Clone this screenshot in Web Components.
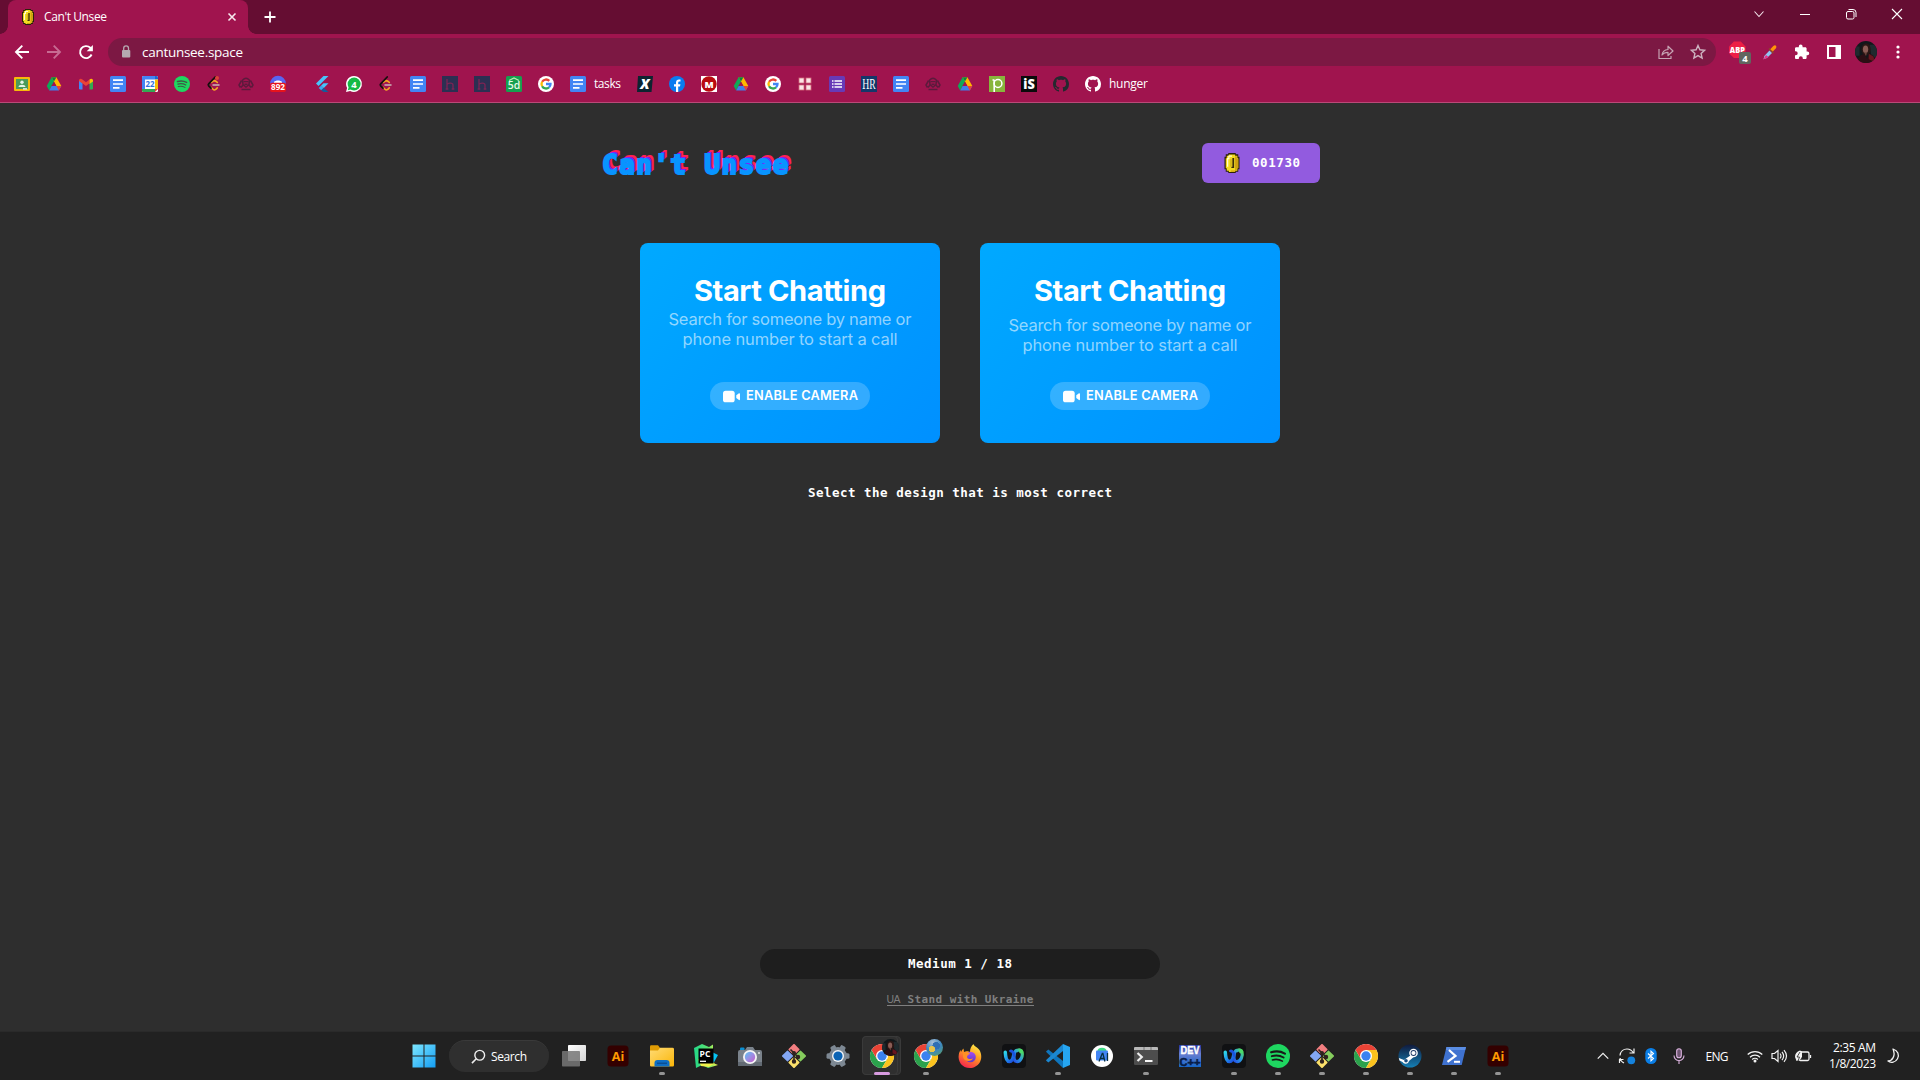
<!DOCTYPE html>
<html lang="en">
<head>
<meta charset="utf-8">
<title>Can't Unsee</title>
<style>
html,body{margin:0;height:100%;background:#2e2e2e;overflow:hidden}
body{font-family:"Open Sans","Noto Sans",sans-serif}
</style>
</head>
<body>
<desk-screen></desk-screen>
<script>
const svg=(vb,body)=>`<svg viewBox="0 0 ${vb} ${vb}" width="100%" height="100%">${body}</svg>`;
const crest='<g fill="none" stroke="#5c1a3c" stroke-width="1.500"><path d="M4.500 4.200Q8 .5 11.500 4.200L11 8.500 8 11 5 8.500z"/><path d="M3.600 4.500 1 9l1.500 2.500M12.400 4.500 15 9l-1.500 2.500M3 11.500 5 9M13 11.500 11 9M3.500 13.500h9"/></g><path d="M5.500 5h5v1.200h-5zM6.500 7.500h3V9h-3z" fill="#5c1a3c"/>';
const leet='<path d="M9.600 5.300 8 4.600 5.500 6.300M5 11.300l2 2a2 2 0 0 0 2.800 0l1.500-1.400M8 4.600l1.600.4 1.700 1.400" fill="none" stroke="#f5a623" stroke-width="1.600" stroke-linecap="round"/><path d="M9.200 1 2.700 7.800a1.500 1.500 0 0 0 0 2l2.300 2.300" fill="none" stroke="#15100c" stroke-width="1.800" stroke-linecap="round"/><path d="M7 9h6" stroke="#c9b7b9" stroke-width="1.500" stroke-linecap="round"/>';
const docs='<rect width="16" height="16" rx="1.500" fill="#4285f4"/><path d="M3 4.200h10M3 8h10M3 11.800h6.500" stroke="#fff" stroke-width="1.700"/>';
const drive='<path d="M5.600 1.300h4.800L5.500 10.100 3.200 14.500 .7 10.100z" fill="#0fa958"/><path d="M10.400 1.300H5.600l4.800 8.800h4.900z" fill="#ffba00"/><path d="M3.200 14.500h9.600l2.500-4.400H5.600z" fill="#3f7fea"/><path d="M5.600 1.300h4.800L8 5.600z" fill="#0b8043"/><path d="M10.400 10.100h4.900l-2.500 4.400z" fill="#e94335"/><path d="M8 5.800 10.400 10.100H5.600z" fill="#a0144d"/>';
const google='<circle cx="8" cy="8" r="8" fill="#fff"/><g fill="none" stroke-width="2.300"><path d="M11.300 4.900A4.500 4.500 0 0 0 4.100 5.800" stroke="#ea4335"/><path d="M4.100 5.800a4.500 4.500 0 0 0 0 4.400" stroke="#fbbc05"/><path d="M4.100 10.200a4.500 4.500 0 0 0 6.900 1.200" stroke="#34a853"/><path d="M8 8h4.500a4.500 4.500 0 0 1-1.500 3.400" stroke="#4285f4"/></g>';
const octo=c=>`<path fill="${c}" d="M8 0C3.580 0 0 3.580 0 8c0 3.540 2.290 6.530 5.470 7.590.4.070.55-.17.55-.38 0-.19-.01-.82-.01-1.490-2.010.37-2.530-.49-2.690-.94-.09-.23-.48-.94-.82-1.130-.28-.15-.68-.52-.01-.53.63-.01 1.080.58 1.230.82.72 1.210 1.870.87 2.330.66.07-.52.28-.87.51-1.070-1.780-.2-3.640-.89-3.640-3.950 0-.87.31-1.590.82-2.150-.08-.2-.36-1.020.08-2.120 0 0 .67-.21 2.200.82.64-.18 1.320-.27 2-.27s1.360.09 2 .27c1.530-1.040 2.200-.82 2.200-.82.44 1.100.16 1.920.08 2.120.51.56.82 1.270.82 2.150 0 3.070-1.870 3.750-3.650 3.950.29.25.54.73.54 1.480 0 1.070-.01 1.930-.01 2.200 0 .21.15.46.55.38A8.010 8.010 0 0 0 16 8c0-4.420-3.580-8-8-8z"/>`;
const hk='<rect width="16" height="16" fill="#2c2f52"/><path d="M5 3v10M5 8.500c1-2 6-2 6 .5v4M3.700 13h2.600M9.700 13h2.600" fill="none" stroke="#7c2455" stroke-width="1.300"/>';
const spot=(c,k)=>`<circle cx="12" cy="12" r="12" fill="${c}"/><g fill="none" stroke="${k}" stroke-linecap="round"><path d="M5.200 8.300c4.500-1.300 9.800-.9 13.700 1.300" stroke-width="2.200"/><path d="M5.800 12.200c4-1.100 8.300-.7 11.800 1.300" stroke-width="1.900"/><path d="M6.400 15.900c3.500-.9 6.800-.6 10 1.200" stroke-width="1.600"/></g>`;
const chrome='<circle cx="12" cy="12" r="12" fill="#fff"/><path d="M1.600 6A12 12 0 0 0 12 24l5.200-9L12 12 6.800 15z" fill="#2ba24c"/><path d="M22.400 6A12 12 0 0 1 12 24l5.200-9V9L12 6z" fill="#fcc31e"/><path d="M1.600 6 6.800 15 12 12V6h10.400A12 12 0 0 0 1.600 6z" fill="#ea4335"/><circle cx="12" cy="12" r="6" fill="#fff"/><circle cx="12" cy="12" r="4.700" fill="#3b82f0"/>';
const gitw='<g transform="rotate(45 12 12)"><rect x="3.300" y="3.300" width="8.200" height="8.200" rx=".6" fill="#f27e80"/><rect x="12.500" y="3.300" width="8.200" height="8.200" rx=".6" fill="#85cc5d"/><rect x="3.300" y="12.500" width="8.200" height="8.200" rx=".6" fill="#83a7f4"/><rect x="12.500" y="12.500" width="8.200" height="8.200" rx=".6" fill="#fbe06b"/></g><g stroke="#30231f" stroke-width="1.600" fill="#30231f"><path d="M8.500 5.500 12 9v9M12 9l4 4" fill="none"/><circle cx="12" cy="9" r="1.200"/><circle cx="12" cy="17.500" r="1.400"/><circle cx="16" cy="13" r="1.400"/></g>';
const ai='<rect x="1.500" y="1.500" width="21" height="21" rx="3.500" fill="#330000"/><text x="12" y="16.500" text-anchor="middle" font-family="Open Sans" font-weight="700" font-size="12.500" fill="#ff9a00">Ai</text>';
const webex='<defs><linearGradient id="wa" x1="0" y1="0" x2="1" y2="1"><stop offset="0" stop-color="#2cd3e8"/><stop offset=".6" stop-color="#1e7bea"/><stop offset="1" stop-color="#1b46d8"/></linearGradient><linearGradient id="wb" x1="0" y1="1" x2="1" y2="0"><stop offset="0" stop-color="#2450e8"/><stop offset=".5" stop-color="#299be0"/><stop offset="1" stop-color="#53e35b"/></linearGradient></defs><rect width="24" height="24" rx="4" fill="#101113"/><path d="M15.500 6.500c-4-1.500-5 10.500-1 11 4.500.5 6.500-6 5.500-9.500-.7-2.300-3-2.500-4.500-1.500" fill="none" stroke="url(#wb)" stroke-width="3.200" stroke-linecap="round" stroke-linejoin="round"/><path d="M3.300 8.300c.2 4.500 1.300 9 4.200 9.200 3 .1 4-4.500 4.500-8" fill="none" stroke="url(#wa)" stroke-width="3.500" stroke-linecap="round"/><path d="M8.500 7c1.800-.5 3 2 3.600 4.500" fill="none" stroke="#1b52dd" stroke-width="2.800" stroke-linecap="round"/><circle cx="19" cy="7.500" r="1.900" fill="#4bdc6b"/>';
const coin='<path d="M5 0h6v1h2v2h1v10h-1v2h-2v1H5v-1H3v-2H2V3h1V1h2z" fill="#2b2208"/><path d="M5.500 1.100h5v1h1.800v2h.7v8h-.7v2h-1.800v1h-5v-1H3.800v-2H3V4.100h.8V2.100h1.700z" fill="#f3da20"/><path d="M5 2h3v1H6v2H5v6H4V4h1z" fill="#fffbd0"/><path d="M10.500 2.500h1.300v2h1.200v7.500h-1.200v2h-1.300v1H7v-1h3.500z" fill="#cfa010"/><path d="M8.300 4h1.400v8H7.500v-1h.8z" fill="#3a2c08"/><path d="M6.700 5h1v6h-1z" fill="#c9ab18"/>';
const face='<defs><clipPath id="fc"><circle cx="12" cy="12" r="12"/></clipPath></defs><g clip-path="url(#fc)"><rect width="24" height="24" fill="#11171a"/><path d="M16 4h8v14h-6zM0 6h5v10H0z" fill="#1f2a2e"/><ellipse cx="12" cy="9" rx="5" ry="6.500" fill="#2a1614"/><ellipse cx="11.500" cy="9" rx="2.900" ry="4.200" fill="#8a5c55"/><path d="M2 24c1-7 5-9 8-10l3 5 3-5c4 1 6 4 7 10z" fill="#2c0f14"/><path d="M15 14l5 3 2 6-7-3z" fill="#68161f"/><path d="M10 12.500h3l-1 4z" fill="#6b443c"/></g>';
const IC={
coin:[16,coin],
close:[16,'<path d="m4.500 4.500 7 7m0-7-7 7" stroke="#f7e9ee" stroke-width="1.600"/>'],
plus:[16,'<path d="M8 2.500v11M2.500 8h11" stroke="#fff" stroke-width="1.800"/>'],
chev:[16,'<path d="m3.500 5.500 4.500 5 4.500-5" fill="none" stroke="#f3e6ec" stroke-width="1.100"/>'],
min:[16,'<path d="M3 8.500h10" stroke="#fff"/>'],
restore:[16,'<g fill="none" stroke="#fff"><rect x="3.500" y="5.500" width="7.500" height="7.500" rx="1.500"/><path d="M5.500 3.500H10a3 3 0 0 1 3 3V11"/></g>'],
wclose:[16,'<path d="m3 3 10 10m0-10L3 13" stroke="#fff" stroke-width="1.100"/>'],
back:[16,'<path d="M15 8H2m6.300-6.300L2 8l6.300 6.300" fill="none" stroke="#fff" stroke-width="1.900"/>'],
fwd:[16,'<path d="M1 8h13M7.700 1.700 14 8l-6.300 6.300" fill="none" stroke="#c76b92" stroke-width="1.900"/>'],
reload:[16,'<path d="M13.600 10.500A6 6 0 1 1 12.300 3.800l1 1" fill="none" stroke="#fff" stroke-width="1.900"/><path d="M14.900 1v6.200H8.700z" fill="#fff"/>'],
lock:[16,'<rect x="4" y="6" width="8.300" height="7.500" rx="1" fill="#b5a9b0"/><path d="M5.700 6V4.300a2.400 2.400 0 0 1 4.800 0V6" fill="none" stroke="#b5a9b0" stroke-width="1.300"/>'],
share:[16,'<path d="M1 5v9.500h12V12M4 11c.5-3.500 2.500-5.300 6-5.500V2.200L15 7l-5 4.500V8.300C7.500 8.300 5.500 9 4 11z" fill="none" stroke="#c7a3b3" stroke-width="1.200" stroke-linejoin="round"/>'],
star:[16,'<path d="m8 1.500 1.900 4.300 4.700.5-3.500 3.100 1 4.600L8 11.600 3.900 14l1-4.600L1.400 6.300l4.700-.5z" fill="none" stroke="#cdb3c0" stroke-width="1.400"/>'],
abp:[24,'<path d="M5.300 0h7.400L18 5.300v7.400L12.700 18H5.300L0 12.700V5.300z" transform="translate(0 -.5) scale(.92)" fill="#ed1e45"/><text x="8.300" y="10.700" text-anchor="middle" font-family="Open Sans" font-weight="800" font-size="8.200" textLength="15" lengthAdjust="spacingAndGlyphs" fill="#fff">ABP</text><rect x="10" y="10" width="12" height="12" rx="2" fill="#61655f"/><text x="16" y="19.700" text-anchor="middle" font-family="Open Sans" font-weight="700" font-size="9.500" fill="#fff">4</text>'],
drop:[16,'<path d="M7.500 6.500 10 9l-5 5-3.500 1.200L2.300 12z" fill="#8fc5f2"/><path d="m4 11 2.500 2L1.200 15.500z" fill="#ee2c86"/><path d="m7 4.500 4.500 4.500" stroke="#8a4b28" stroke-width="1.500"/><path d="m8.300 5.300 3-3.300c2-1.700 4 .2 2.700 2.200l-3.200 3.300z" fill="#ff9408"/>'],
puzzle:[16,'<path d="M13.400 7.500h-.8V4.600c0-.7-.6-1.300-1.300-1.300H8.600V2.500a1.900 1.900 0 0 0-3.800 0v.8H2.200C1.500 3.300 1 3.900 1 4.600v2.600h.7a2 2 0 0 1 0 4H1v2.500c0 .7.500 1.300 1.200 1.300h2.600v-.7a2 2 0 0 1 4 0v.7h2.500c.7 0 1.300-.6 1.300-1.300v-2.500h.8a1.850 1.850 0 0 0 0-3.700z" fill="#fff"/>'],
side:[16,'<path d="M1 1h14v14H1zM3 3v10h6.500V3z" fill="#fff" fill-rule="evenodd"/>'],
face:[24,face],
dots:[16,'<g fill="#fff"><circle cx="8" cy="3" r="1.600"/><circle cx="8" cy="8" r="1.600"/><circle cx="8" cy="13" r="1.600"/></g>'],
classroom:[16,'<rect y="1" width="16" height="14" rx="1" fill="#f7b90a"/><rect x="2" y="3" width="12" height="10" fill="#4a9a5a"/><rect x="9" y="12.200" width="4" height="1.400" fill="#e8f3ec"/><circle cx="8" cy="6.300" r="1.700" fill="#e6f4e9"/><path d="M4.500 11c0-3 7-3 7 0z" fill="#e6f4e9"/>'],
drive:[16,drive],
gmail:[16,'<path d="M1 13V4.500L4.500 7v6.500H2z" fill="#4285f4"/><path d="M15 13V4.500L11.500 7v6.500H14z" fill="#34a853"/><path d="M1 5.500C.5 3 2.700 2 4.500 3.500L8 6.200l3.500-2.700V7.200L8 9.900 1 5z" fill="#ea4335"/><path d="M11.500 3.500C13.300 2 15.500 3 15 5.500l-3.500 2.600z" fill="#fbbc04"/>'],
docs:[16,docs],
cal:[16,'<rect width="16" height="16" rx="1.500" fill="#fff"/><path d="M0 1.500A1.500 1.500 0 0 1 1.500 0H13v3.500H3V13H0z" fill="#4285f4"/><path d="M13 0h1.500A1.500 1.500 0 0 1 16 1.500v2h-3z" fill="#1967d2"/><path d="M13 3.500h3V13h-3z" fill="#fbbc04"/><path d="M0 13h13v3H1.500A1.500 1.500 0 0 1 0 14.500z" fill="#34a853"/><path d="M13 13h3l-3 3z" fill="#ea4335"/><text x="8" y="11.300" text-anchor="middle" font-family="Open Sans" font-weight="700" font-size="8" textLength="9" lengthAdjust="spacingAndGlyphs" fill="#2f6fde">22</text>'],
spotb:[24,spot('#1ed760','#3d5a45')],
spot:[24,spot('#1ed760','#191919')],
leet:[16,leet],
leetd:[16,leet+'<circle cx="11" cy="2" r="2" fill="#db4437"/>'],
crest:[16,crest],
b892:[16,'<circle cx="8" cy="7.500" r="7.800" fill="#5865f2"/><path d="M4 6c1.500-2 6.500-2 8 0v2H4z" fill="#fff"/><rect y="6.700" width="16" height="9.300" rx="2" fill="#e6141c"/><text x="8" y="14.200" text-anchor="middle" font-family="Open Sans" font-weight="700" font-size="8" textLength="14" lengthAdjust="spacingAndGlyphs" fill="#fff">892</text>'],
flutter:[16,'<path d="M9.500 0h5L4.500 10 2 7.500z" fill="#47c5fb"/><path d="M9.500 7.300h5L9.800 12 7 9.700z" fill="#47c5fb"/><path d="m7.200 9.600 2.500 2.400-2.500 2.300L4.700 12z" fill="#3aa9ee"/><path d="m7.200 14.300 2.500-2.400 4.800 4.100h-5z" fill="#145c9c"/>'],
wa:[16,'<path d="M8 0a8 8 0 1 1-3.900 15L0 16l1.100-4A8 8 0 0 1 8 0z" fill="#fff"/><circle cx="8.100" cy="8" r="6.500" fill="#16b945"/><path d="m1.800 14.200 1-3.500 2.500 2.500z" fill="#16b945"/><text x="8" y="11.500" text-anchor="middle" font-family="Open Sans" font-weight="700" font-size="9.500" fill="#fff">4</text>'],
hk:[16,hk],
sd:[16,'<rect width="16" height="16" rx="1.500" fill="#169f4f"/><text x="8" y="13.300" text-anchor="middle" font-family="Open Sans" font-weight="600" font-size="10.500" fill="#e9f9e9">5d</text><path d="M3 4.500 8 2l5 2.500" fill="none" stroke="#bfe9b4" stroke-width="1.200"/>'],
google:[16,google],
xx:[16,'<path d="M1 0h15l-1.500 16H0z" fill="#0d2430"/><text x="8" y="13.200" text-anchor="middle" font-family="Open Sans" font-style="italic" font-weight="800" font-size="14" fill="#fff">X</text>'],
fb:[16,'<circle cx="8" cy="8" r="8" fill="#0a7cf0"/><path d="M7 16v-5.500H5V8.200h2V6.600c0-2 1.200-3.200 3-3.200h1.500v2h-1c-1 0-1.300.6-1.300 1.300v1.500h2.200l-.4 2.300H9.200V16z" fill="#fff"/>'],
m:[16,'<rect width="16" height="16" fill="#fff"/><circle cx="8" cy="8" r="7.700" fill="#b90b10"/><text x="8" y="11.500" text-anchor="middle" font-family="Open Sans" font-weight="800" font-size="9.500" fill="#fff">M</text>'],
four:[16,'<g fill="#fbe4e4" stroke="#d56c7c" stroke-width=".8"><rect x="2" y="2" width="5" height="5"/><rect x="9" y="2" width="5" height="5"/><rect x="2" y="9" width="5" height="5"/><rect x="9" y="9" width="5" height="5"/></g>'],
list:[16,'<rect width="16" height="16" rx="1.500" fill="#673ab7"/><path d="M5.500 5h7.500M5.500 8h7.500M5.500 11h7.500M3 5h1.500M3 8h1.500M3 11h1.500" stroke="#fff" stroke-width="1.600"/>'],
hr:[16,'<rect width="16" height="16" fill="#14376a"/><text x="8" y="12.700" text-anchor="middle" font-family="Liberation Serif" font-size="14" textLength="13.500" lengthAdjust="spacingAndGlyphs" fill="#fff">HR</text>'],
p:[16,'<rect width="16" height="16" fill="#88b53c"/><path d="M5.200 16V4M3.500 4h2" stroke="#fff" stroke-width="1.600"/><circle cx="9" cy="7.500" r="3.900" fill="none" stroke="#fff" stroke-width="1.500"/>'],
is:[16,'<rect width="16" height="16" fill="#0b0b0b"/><text x="8" y="13" text-anchor="middle" font-family="Open Sans" font-weight="800" font-size="13.500" textLength="11.500" lengthAdjust="spacingAndGlyphs" fill="#fff">iS</text>'],
octd:[16,octo('#24292f')],
octw:[16,octo('#fff')],
video:[16,'<rect x="0" y="2.500" width="11" height="11" rx="2.500" fill="#fff"/><path d="M12.500 6.800 15 5q1-.3 1 .8v4.900q0 1-1 .6L12.500 9.500z" fill="#fff"/>'],
win:[24,'<defs><linearGradient id="wg" x1="0" y1="0" x2="24" y2="24" gradientUnits="userSpaceOnUse"><stop offset="0" stop-color="#7fe8ff"/><stop offset="1" stop-color="#119cf4"/></linearGradient></defs><path d="M.5.500h11v11H.5zM12.500.500h11v11h-11zM.5 12.500h11v11H.5zM12.500 12.500h11v11h-11z" fill="url(#wg)"/>'],
mag:[16,'<circle cx="9.300" cy="6.700" r="5.200" fill="none" stroke="#eee" stroke-width="1.500"/><path d="M5.600 10.400 1 15" stroke="#eee" stroke-width="1.700"/>'],
tv:[24,'<defs><linearGradient id="tg" x2="1" y2="1"><stop stop-color="#fff"/><stop offset="1" stop-color="#d4d4d4"/></linearGradient></defs><rect x="6" y="1" width="18" height="16" rx=".8" fill="url(#tg)"/><rect y="7" width="18" height="15.500" rx=".8" fill="#777" opacity=".85"/>'],
ai:[24,ai],
folder:[24,'<defs><linearGradient id="fg" x2="1" y2="1"><stop stop-color="#ffdb75"/><stop offset="1" stop-color="#fbb608"/></linearGradient></defs><path d="M0 2.500Q0 1.300 1.200 1.300H8l2 2.500V8H0z" fill="#e09c04"/><path d="M0 6.500h8l2-2.700h12.500Q24 3.800 24 5.200v16Q24 22.500 22.800 22.500H1.200Q0 22.500 0 21.200z" fill="url(#fg)"/><path d="M4.500 22.500v-3.500q0-3 3-3h9q3 0 3 3v3.500z" fill="#0f6fc4"/><path d="M7 19.300h10" stroke="#0b4f94" stroke-width="1.500"/>'],
pc:[24,'<defs><linearGradient id="pg" x2="1"><stop stop-color="#21d789"/><stop offset=".6" stop-color="#5fe36f"/><stop offset="1" stop-color="#fcf84a"/></linearGradient></defs><path d="M0 4 8 0l7 3 4-2.500L19 5v14l5 2-10 3L8 21l-6 3L1 14z" fill="url(#pg)"/><path d="m18 8 6 3-5 9z" fill="#07c3f2"/><path d="m4 15 3 7 8 1 6-4z" fill="#f2f04b"/><rect x="4.500" y="4.500" width="15" height="15" fill="#000"/><text x="11" y="12.600" text-anchor="middle" font-family="Open Sans" font-weight="700" font-size="8.500" fill="#fff">PC</text><path d="M6 17.300h6" stroke="#fff" stroke-width="1.300"/>'],
cam:[24,'<defs><linearGradient id="cg" x2="1" y2="1"><stop stop-color="#57c4ef"/><stop offset=".5" stop-color="#9a8fe6"/><stop offset="1" stop-color="#c85cc7"/></linearGradient></defs><rect x="2" y="3.500" width="4.500" height="4" rx="1" fill="#0b8fd3"/><path d="M0 8q0-2 2-2h5l2-3h6l2 3h5q2 0 2 2v13q0 1-1 1H1q-1 0-1-1z" fill="#7a828b"/><path d="M0 18h24v3q0 1-1 1H1q-1 0-1-1z" fill="#626a73"/><circle cx="12" cy="13" r="7" fill="#f4f4f6"/><circle cx="12" cy="13" r="5.200" fill="url(#cg)"/><circle cx="21" cy="9" r="1" fill="#ddd"/>'],
gitw:[24,gitw],
gear:[24,'<g fill="#7d8893"><circle cx="12" cy="12" r="9"/><rect x="9.200" y="0.500" width="5.600" height="23" rx="1.500" transform="rotate(30 12 12)"/><rect x="9.200" y=".5" width="5.600" height="23" rx="1.500" transform="rotate(90 12 12)"/><rect x="9.200" y=".5" width="5.600" height="23" rx="1.500" transform="rotate(150 12 12)"/></g><circle cx="12" cy="12" r="6" fill="#f3f5f7"/><circle cx="12" cy="12" r="4.600" fill="#0a63b4"/>'],
chrome:[24,chrome],
fox:[24,'<defs><linearGradient id="ffg" x1=".8" y1="0" x2=".3" y2="1"><stop stop-color="#fff04a"/><stop offset=".45" stop-color="#ff9a22"/><stop offset="1" stop-color="#f5224f"/></linearGradient><linearGradient id="ffp" x2="0" y2="1"><stop stop-color="#a64df0"/><stop offset="1" stop-color="#5a37c8"/></linearGradient></defs><path d="M15.500 0c0 2 5 3.500 6.500 7 4 9-2 17-10 17S-.5 17.500.8 10.500C1 8.500 2 7 2.500 6l.5 2c.8-1.700 1.500-2.500 2.500-3.500L6 8c3-1.500 5 0 6 0 0-3 1-6 3.500-8z" fill="url(#ffg)"/><circle cx="12.500" cy="13" r="5.300" fill="url(#ffp)"/><path d="M5 9c3-2 5 0 7 0-1 2-3 2-3 4s4 3 6 1c-1 4-9 4-10-1z" fill="#ff9025"/>'],
webex:[24,webex],
code:[24,'<path d="M17 24 1 8.700 0 7.500l2.300-2L17 17z" fill="#0f75bd"/><path d="M17 0 1 15.200 0 16.500l2.300 2L17 7z" fill="#1b87d1"/><path d="M17 0 24 3v18l-7 3z" fill="#26a6f2"/>'],
studio:[24,'<circle cx="12" cy="12" r="11" fill="#fff"/><path d="M7.500 7.500a4.500 3.700 0 0 1 9 0z" fill="#3ddc84"/><rect x="6" y="6.500" width="12" height="10" rx="1" fill="#4285f4"/><path d="m9 17.500 3.300-8h.6l2 8M10.300 14.500h4M17.500 9v8" fill="none" stroke="#073042" stroke-width="1.300"/>'],
term:[24,'<rect y="3" width="24" height="18" rx="1.300" fill="#4d4d4d"/><path d="M0 6V4.300Q0 3 1.300 3H22.700Q24 3 24 4.300V6z" fill="#b8b8b8"/><path d="M10 3v3M17 3v3" stroke="#777"/><path d="m3.500 9 4.300 4-4.300 4" fill="none" stroke="#eee" stroke-width="2.200"/><path d="M11 17h7.500" stroke="#fff" stroke-width="1.900"/>'],
dev:[24,'<defs><linearGradient id="dg" x2="0" y2="1"><stop stop-color="#23339e"/><stop offset=".4" stop-color="#6a7ed0"/><stop offset="1" stop-color="#1666c8"/></linearGradient></defs><rect x="1" y="1" width="22" height="22" fill="url(#dg)"/><text x="12" y="10.300" text-anchor="middle" font-family="Liberation Sans" font-weight="700" font-size="10" textLength="19" lengthAdjust="spacingAndGlyphs" fill="#fff" stroke="#fff" stroke-width=".4">DEV</text><text x="12" y="21.500" text-anchor="middle" font-family="Liberation Sans" font-weight="700" font-size="10" textLength="21" lengthAdjust="spacingAndGlyphs" fill="#071c46" stroke="#071c46" stroke-width=".5">C++</text>'],
steam:[24,'<defs><linearGradient id="sg" x2="0" y2="1"><stop stop-color="#101a3c"/><stop offset="1" stop-color="#1580b5"/></linearGradient></defs><circle cx="12" cy="12" r="11.500" fill="url(#sg)"/><path d="M.8 14 6 16l7-5 2-4 3 4-7 6a3.500 3.500 0 0 1-6.500 1L1.500 16.500z" fill="#fff"/><circle cx="15.500" cy="9" r="4.300" fill="#fff"/><circle cx="15.500" cy="9" r="2.900" fill="#1b3560"/><circle cx="15.500" cy="9" r="2.100" fill="#fff"/><circle cx="8" cy="16.800" r="1.800" fill="#1b4f83"/>'],
ps:[24,'<path d="M4.500 3H24l-4.300 18H0z" fill="#3f72d0"/><path d="M4.500 3H24l-.8 3H3.800z" fill="#5a8de4"/><path d="m7 6 6.500 6L5.500 17.800" fill="none" stroke="#fff" stroke-width="2.200"/><path d="M12 17.800h6" stroke="#fff" stroke-width="2"/>'],
up:[16,'<path d="M2 11 8 5l6 6" fill="none" stroke="#f2f2f2" stroke-width="1.400"/>'],
sync:[16,'<path d="M1 7.500C1.500 3.500 4.500 1 8 1c3 0 5 1.500 6.500 4M15 .5V5h-4.500M1 10c.5 2.500 2 4 4 5M.5 15v-3.500h4" fill="none" stroke="#f2f2f2" stroke-width="1.200"/><circle cx="12.300" cy="12.300" r="3.900" fill="#1583dd"/>'],
bt:[16,'<rect x="2.300" y="0" width="11.400" height="16" rx="5.500" fill="#0a7ee6"/><path d="m5 5.500 5.500 5L8 12.800V3.200l2.500 2.300L5 10.500" fill="none" stroke="#fff" stroke-width="1.100"/>'],
mic:[16,'<rect x="5.700" y=".7" width="4.600" height="9" rx="2.300" fill="#6f5673" stroke="#dcb4e0" stroke-width="1.100"/><path d="M3 7.500a5 5 0 0 0 10 0M8 12.500V16" fill="none" stroke="#dcb4e0" stroke-width="1.100"/>'],
wifi:[16,'<g fill="none" stroke="#f2f2f2" stroke-width="1.300"><path d="M.7 6.500a10.500 10.500 0 0 1 14.600 0M3 9.200a7.200 7.200 0 0 1 10 0M5.200 11.500a4 4 0 0 1 5.600 0"/></g><circle cx="8" cy="13" r="1.500" fill="#f2f2f2"/>'],
snd:[16,'<g fill="none" stroke="#f2f2f2" stroke-width="1.200"><path d="M1 5.500h2.500L7 2.500v11L3.500 10.500H1zM9 5.500q2 2.500 0 5M11 3.800q3.300 4.200 0 8.400M13 2.200q5 5.800 0 11.600"/></g>'],
bat:[16,'<rect x="4" y="4" width="10" height="8.500" rx="1.500" fill="none" stroke="#f2f2f2" stroke-width="1.300"/><path d="M15.500 7v3" stroke="#f2f2f2" stroke-width="1.300"/><path d="M0 9q0-5 5-6.500l2 1v5q-1 4-5.500 4.500z" fill="#f2f2f2"/><path d="m5 4-3 5h2.500L3 13" fill="none" stroke="#222" stroke-width=".8"/>'],
moon:[16,'<path d="M8 1c5 1.500 6.500 6 4.500 9.700C10.500 14.300 6 15.500 3 13c4 0 8-5 5-12z" fill="none" stroke="#f2f2f2" stroke-width="1.300" stroke-linejoin="round"/>']
};
const define=(name,html,after)=>customElements.define(name,class extends HTMLElement{
  connectedCallback(){
    if(this.shadowRoot)return;
    this.attachShadow({mode:'open'}).innerHTML=typeof html==='function'?html(this):html;
    if(after)after(this);
  }
});
/* ui-icon: inline vector glyph, square, size in px */
define('ui-icon',el=>{
  const s=el.getAttribute('size')||16,[vb,b]=IC[el.getAttribute('name')];
  return `<style>:host{display:block;flex:none;width:${s}px;height:${s}px}svg{display:block;overflow:visible}</style>${svg(vb,b)}`;
});
/* ui-label: one line of text tracked to a given width */
define('ui-label',el=>`<style>:host{display:block;flex:none;width:${el.getAttribute('w')}px;white-space:pre}span{display:inline-block}</style><span><slot></slot></span>`,el=>{
  const s=el.shadowRoot.querySelector('span'),n=el.textContent.length;
  s.style.letterSpacing=((+el.getAttribute('w')-s.getBoundingClientRect().width)/(n-1||1)).toFixed(3)+'px';
});
define('ui-cell',el=>`<style>:host{display:flex;flex:none;align-items:center;justify-content:center;height:100%;width:${el.getAttribute('w')||32}px}</style><slot></slot>`);
define('browser-tabs',`<style>
:host{display:flex;height:34px;background:#650d32;padding-left:8px;color:#fff;font-size:12px}
.tab{box-sizing:border-box;width:240px;height:34px;background:#a0144e;border-radius:8px 8px 0 0;display:flex;align-items:center;padding:0 8px 0 12px;position:relative}
.tab:before,.tab:after{content:"";position:absolute;bottom:0;width:8px;height:8px}
.tab:before{left:-8px;background:radial-gradient(circle at 0 0,transparent 7.5px,#a0144e 8px)}
.tab:after{right:-8px;background:radial-gradient(circle at 100% 0,transparent 7.5px,#a0144e 8px)}
ui-label{margin-left:8px;line-height:34px;padding-bottom:1px}.x{margin-left:auto}
.controls{margin-left:auto;display:flex;height:28px}
</style><div class="tab"><ui-icon name="coin"></ui-icon><ui-label w="63">Can't Unsee</ui-label><ui-icon class="x" name="close"></ui-icon></div>
<ui-cell w="44"><ui-icon name="plus"></ui-icon></ui-cell>
<div class="controls"><ui-cell w="46"><ui-icon name="chev"></ui-icon></ui-cell><ui-cell w="46"><ui-icon name="min"></ui-icon></ui-cell><ui-cell w="46"><ui-icon name="restore"></ui-icon></ui-cell><ui-cell w="46"><ui-icon name="wclose"></ui-icon></ui-cell></div>`);
define('browser-toolbar',`<style>
:host{display:flex;align-items:center;height:36px;background:#a0144e;padding:0 6px;color:#fff}
.bar{flex:1;margin:0 6px;height:28px;border-radius:14px;background:#7c1843;display:flex;align-items:center;padding:0 2px 0 10px}
ui-label{font-size:13.500px;line-height:28px;margin-left:8px}
.end{margin-left:auto;display:flex}.abp{padding:4px 0 0 6px}
</style><ui-cell><ui-icon name="back"></ui-icon></ui-cell><ui-cell><ui-icon name="fwd"></ui-icon></ui-cell><ui-cell><ui-icon name="reload"></ui-icon></ui-cell>
<div class="bar"><ui-icon name="lock"></ui-icon><ui-label w="101">cantunsee.space</ui-label><div class="end"><ui-cell><ui-icon name="share"></ui-icon></ui-cell><ui-cell><ui-icon name="star"></ui-icon></ui-cell></div></div>
<ui-cell><ui-icon class="abp" name="abp" size="24"></ui-icon></ui-cell><ui-cell><ui-icon name="drop"></ui-icon></ui-cell><ui-cell><ui-icon name="puzzle"></ui-icon></ui-cell><ui-cell><ui-icon name="side"></ui-icon></ui-cell><ui-cell><ui-icon name="face" size="22"></ui-icon></ui-cell><ui-cell><ui-icon name="dots"></ui-icon></ui-cell>`);
const bm=n=>n.split(' ').map(i=>`<ui-cell><ui-icon name="${i}"></ui-icon></ui-cell>`).join('');
define('bookmark-bar',`<style>
:host{display:flex;box-sizing:border-box;height:33px;background:#a0144e;border-bottom:1px solid #b94a78;padding:0 6px 4px;color:#fff;font-size:12px;align-items:center}
.gap{width:12px}ui-label{line-height:28px}.t{margin-right:8px}
</style>${bm('classroom drive gmail docs cal spotb leetd crest b892')}<div class="gap"></div>${bm('flutter wa leet docs hk hk sd google docs')}<ui-label class="t" w="27">tasks</ui-label>${bm('xx fb m drive google four list hr docs crest drive p is octd octw')}<ui-label w="39">hunger</ui-label>`);
define('coin-counter',el=>`<style>
:host{display:flex;box-sizing:border-box;align-items:center;width:118px;height:40px;border-radius:6px;background:#925bdf;padding-left:20px;color:#fff;font:700 12.500px/40px "DejaVu Sans Mono",monospace}
ui-label{margin-left:10px}
</style><ui-icon name="coin" size="20"></ui-icon><ui-label w="48">${el.getAttribute('value')}</ui-label>`);
define('game-header',`<style>
:host{display:flex;width:720px;height:40px;align-items:center;justify-content:space-between}
h1{margin:4px 0 0 2px;font:700 26px/40px "DejaVu Sans Mono",monospace;letter-spacing:1.400px;color:#0894ff;-webkit-text-stroke:2px #0894ff;text-shadow:1px -1px #7b22ff,2px -2px #7b22ff,3px -3px #ff2056,4px -4px #ff2056}
</style><h1>Can't Unsee</h1><coin-counter value="001730"></coin-counter>`);
define('design-card',el=>`<style>
:host{display:flex;flex-direction:column;align-items:center;box-sizing:border-box;width:300px;height:200px;border-radius:8px;background:linear-gradient(135deg,#00a9ff,#0090ff);color:#fff;font-family:Inter,sans-serif;padding-top:30px}
h2{margin:0;font-size:29px;font-weight:700;line-height:36px}
.sub{margin-top:${el.getAttribute('gap')}px;height:${73-el.getAttribute('gap')}px;font-size:16.500px;line-height:20px;font-weight:400;color:rgba(255,255,255,.58);display:flex;flex-direction:column;align-items:center}
.btn{display:flex;box-sizing:border-box;align-items:center;width:160px;height:28px;border-radius:14px;background:rgba(255,255,255,.2);padding-left:13px;font-size:12.800px;font-weight:600;line-height:28px}
.btn ui-label{margin-left:6px}
</style><h2><ui-label w="192">Start Chatting</ui-label></h2>
<div class="sub"><ui-label w="243">Search for someone by name or</ui-label><ui-label w="215">phone number to start a call</ui-label></div>
<div class="btn"><ui-icon name="video" size="17"></ui-icon><ui-label w="112">ENABLE CAMERA</ui-label></div>`);
define('game-page',`<style>
:host{display:flex;flex:1;flex-direction:column;align-items:center;background:#2e2e2e;padding-top:40px;font-family:"DejaVu Sans Mono",monospace;font-weight:700;font-size:12.500px;color:#fff}
.cards{display:flex;gap:40px;margin-top:60px}
.prompt{margin-top:40px;line-height:20px}
.progress{margin-top:auto;width:400px;height:30px;border-radius:15px;background:#1e1e1e;display:flex;justify-content:center;line-height:30px}
.help{display:flex;color:#7f7f7f;font-size:11px;line-height:16px;margin:12px 0 25px}
.help ui-label{height:14px;border-bottom:1px solid #7f7f7f;line-height:17px}
.help .ua{font:400 10.500px/17px "Liberation Sans",sans-serif}
</style><game-header></game-header><div class="cards"><design-card gap="0"></design-card><design-card gap="6"></design-card></div>
<div class="prompt"><ui-label w="304">Select the design that is most correct</ui-label></div>
<div class="progress"><ui-label w="104">Medium 1 / 18</ui-label></div>
<div class="help"><ui-label class="ua" w="14">UA</ui-label><ui-label w="133"> Stand with Ukraine</ui-label></div>`);
/* task-app: taskbar button with optional running indicator, badge and focus state */
define('task-app',el=>`<style>
:host{display:flex;flex:none;position:relative;width:44px;height:48px;align-items:center;justify-content:center}
.run{position:absolute;bottom:5px;left:19px;width:6px;height:3px;border-radius:2px;background:#949494}
.on{left:14px;width:16px;background:#d89be0}
.focus{position:absolute;left:2px;top:4px;width:39px;height:39px;border-radius:4px;border:1px solid #3a3a3a;box-sizing:border-box;background:#2f2f2f}
.focus2{width:36px}
ui-icon{position:relative}.badge{position:absolute;left:22px;top:7px}
.globe{width:17px;height:17px;border-radius:9px;background:radial-gradient(circle at 35% 60%,#e7c34b 0 20%,transparent 22%),radial-gradient(circle at 60% 40%,#2f6fb4 0 25%,transparent 27%),radial-gradient(circle at 40% 20%,#a7bfd8,#3b86bd 50%,#62a45a)}
</style>${el.hasAttribute('focus')?'<div class="focus"></div><div class="focus focus2"></div>':''}<ui-icon name="${el.getAttribute('name')}" size="24"></ui-icon>${el.getAttribute('badge')==='face'?'<ui-icon class="badge" name="face" size="17"></ui-icon>':''}${el.getAttribute('badge')==='globe'?'<div class="badge globe"></div>':''}${el.hasAttribute('run')?`<div class="run ${el.hasAttribute('focus')?'on':''}"></div>`:''}`);
const app=(n,x='')=>`<task-app name="${n}" ${x}></task-app>`;
define('task-bar',`<style>
:host{display:flex;box-sizing:border-box;height:49px;border-top:1px solid #2a2a2a;background:#212121;padding:0 15px 0 402px;color:#fff;font-size:12px;align-items:center}
.search{box-sizing:border-box;display:flex;align-items:center;width:100px;height:32px;border-radius:16px;background:#2f2f2f;border-top:1px solid #3a3a3a;margin:0 3px 0 3px;padding-left:22px}
.search ui-label{margin-left:5px;line-height:30px}
.tray{margin-left:auto;display:flex;align-items:center;height:48px}
.eng{margin-right:4px}
.clock{width:61px;display:flex;flex-direction:column;align-items:flex-end;line-height:16px;margin-right:5px}
</style>${app('win')}<div class="search"><ui-icon name="mag" size="15"></ui-icon><ui-label w="36">Search</ui-label></div>
${app('tv')}${app('ai')}${app('folder','run')}${app('pc')}${app('cam')}${app('gitw')}${app('gear')}${app('chrome','run focus badge="face"')}${app('chrome','run badge="globe"')}${app('fox')}${app('webex')}${app('code','run')}${app('studio')}${app('term','run')}${app('dev')}${app('webex','run')}${app('spot','run')}${app('gitw','run')}${app('chrome','run')}${app('steam','run')}${app('ps','run')}${app('ai','run')}
<div class="tray"><ui-cell w="24"><ui-icon name="up" size="14"></ui-icon></ui-cell><ui-cell w="24"><ui-icon name="sync"></ui-icon></ui-cell><ui-cell w="24"><ui-icon name="bt"></ui-icon></ui-cell><ui-cell w="32"><ui-icon name="mic"></ui-icon></ui-cell><ui-cell class="eng" w="44"><ui-label w="23">ENG</ui-label></ui-cell><ui-cell w="24"><ui-icon name="wifi"></ui-icon></ui-cell><ui-cell w="24"><ui-icon name="snd"></ui-icon></ui-cell><ui-cell w="24"><ui-icon name="bat"></ui-icon></ui-cell><div class="clock"><ui-label w="43">2:35 AM</ui-label><ui-label w="47">1/8/2023</ui-label></div><ui-cell w="24"><ui-icon name="moon"></ui-icon></ui-cell></div>`);
define('desk-screen',`<style>:host{display:flex;flex-direction:column;width:1920px;height:1080px;overflow:hidden}browser-tabs,browser-toolbar,bookmark-bar,task-bar{flex:none}</style>
<browser-tabs></browser-tabs><browser-toolbar></browser-toolbar><bookmark-bar></bookmark-bar><game-page></game-page><task-bar></task-bar>`);
</script>
</body>
</html>
